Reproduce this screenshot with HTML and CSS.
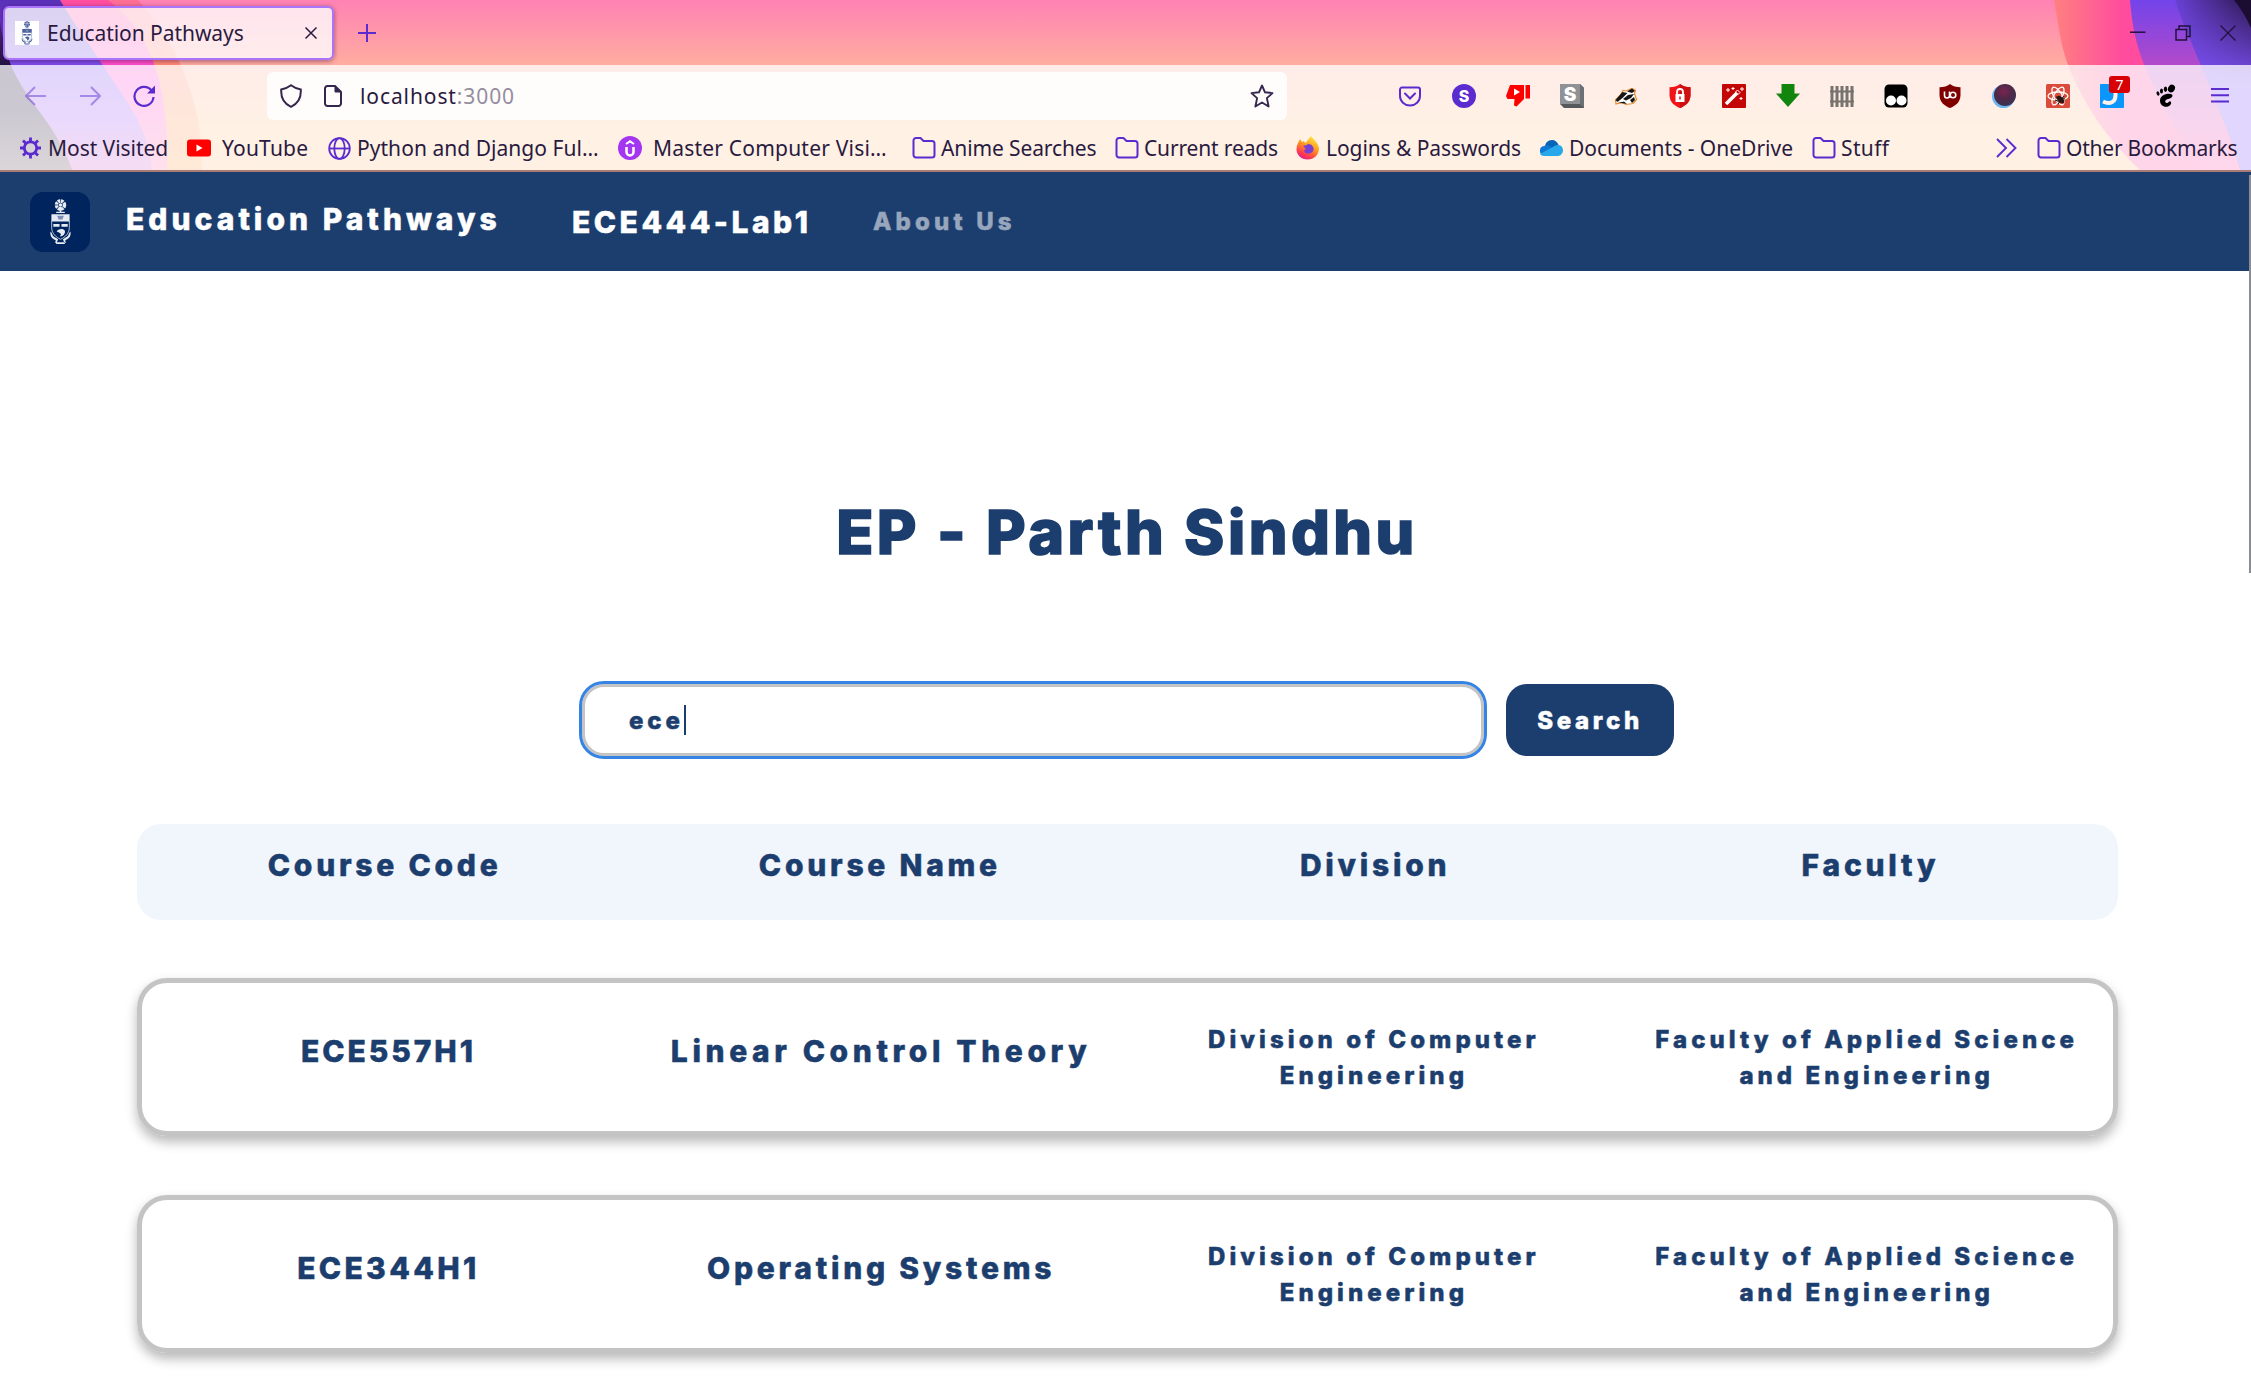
FILE: index.html
```html
<!DOCTYPE html>
<html lang="en">
<head>
<meta charset="utf-8">
<title>Education Pathways</title>
<link rel="stylesheet" href="styles.css">
</head>
<body>
<svg class="defs" width="0" height="0" aria-hidden="true">
  <symbol id="folder" viewBox="0 0 24 24"><path d="M1.500 4.500a2.500 2.500 0 0 1 2.500-2.500h4.500l3 3h8.500a2.500 2.500 0 0 1 2.500 2.500v11.500a2.500 2.500 0 0 1-2.500 2.500h-16a2.500 2.500 0 0 1-2.500-2.500z" fill="none" stroke="#5b2bcf" stroke-width="2"/></symbol>
  <symbol id="crest" viewBox="0 0 24 48">
    <circle cx="12" cy="6.300" r="4.200" fill="none" stroke="currentColor" stroke-width="3.600" stroke-dasharray="2.600 .7"/>
    <circle cx="12" cy="6.300" r="1.800" fill="currentColor"/>
    <g fill="currentColor">
      <path d="M11.200 8h1.600v6h-1.600zM7.500 13.300h9v1.200h-9zM2.500 16h19v7.500h-19z"/>
      <path d="M4.500 26h6.500v3H4.500zM13 26h6.500v3H13z"/>
      <path d="M8 34c1-3 7-4 8.500-1 1 3-2 6-5 6l1-2.500-2-1.500z"/>
      <path d="M1.500 34c2.500 2 1 4.500 5.500 6.500l2.500 1.500-1.500 4h-1.500l.5-3c-3-1-5-3-5.500-6zM22.500 34c-2.500 2-1 4.500-5.500 6.500l-2.500 1.500 1.500 4h1.500l-.5-3c3-1 5-3 5.500-6zM7.500 45h9v2h-9z"/>
    </g>
    <path d="M2.800 23v7c0 6 4.700 10 9.200 12 4.500-2 9.200-6 9.200-12v-7" fill="none" stroke="currentColor" stroke-width=".8"/>
    <path d="M8.500 17.500h7l-1.500 4h-4z" class="crest-crown"/>
  </symbol>
</svg>

<header class="browser">
  <svg class="theme" viewBox="0 0 2251 172" preserveAspectRatio="none" aria-hidden="true">
    <defs>
      <linearGradient id="sky" x1="0" y1="0" x2="0" y2="1"><stop offset="0" stop-color="#ff82b4"/><stop offset=".38" stop-color="#ffada0"/><stop offset=".75" stop-color="#ffc18a"/><stop offset="1" stop-color="#ffbe88"/></linearGradient>
      <linearGradient id="violet" x1="0" y1="0" x2="0" y2="1"><stop offset="0" stop-color="#5a30b8"/><stop offset=".4" stop-color="#8050f0"/><stop offset=".7" stop-color="#a45df0"/><stop offset="1" stop-color="#d56ac8"/></linearGradient>
      <linearGradient id="dark" x1="0" y1="0" x2="0" y2="1"><stop offset="0" stop-color="#4b2b86"/><stop offset=".35" stop-color="#1c0f38"/><stop offset=".6" stop-color="#20153a"/><stop offset="1" stop-color="#6a5060"/></linearGradient>
      <linearGradient id="magenta" x1="0" y1="0" x2="0" y2="1"><stop offset="0" stop-color="#ff4fa0"/><stop offset=".5" stop-color="#ff50d8"/><stop offset="1" stop-color="#ff7aa8"/></linearGradient>
      <linearGradient id="orange" x1="0" y1="0" x2="0" y2="1"><stop offset="0" stop-color="#ff6f98"/><stop offset=".4" stop-color="#ff8d72"/><stop offset="1" stop-color="#ffa050"/></linearGradient>
      <linearGradient id="rightPink" x1="0" y1="0" x2="1" y2="0"><stop offset="0" stop-color="#ff8080"/><stop offset=".35" stop-color="#ff4c9e"/><stop offset="1" stop-color="#ff4ca0"/></linearGradient>
      <linearGradient id="rightViolet" x1="0" y1="0" x2="0" y2="1"><stop offset="0" stop-color="#7244ea"/><stop offset=".4" stop-color="#b64ac8"/><stop offset="1" stop-color="#ff4fa8"/></linearGradient>
      <linearGradient id="rightNight" x1="0" y1="0" x2="1" y2="0"><stop offset="0" stop-color="#6940d4"/><stop offset="1" stop-color="#2c184f"/></linearGradient>
      <linearGradient id="rightNightLow" x1="0" y1="0" x2="0" y2="1"><stop offset="0" stop-color="#7e52f8" stop-opacity="0"/><stop offset=".5" stop-color="#7e52f8"/></linearGradient>
    </defs>
    <path d="M0 0h2251v172H0z" fill="url(#sky)"/>
    <path d="M60 0h78c35 38 66 98 64 172H100z" fill="url(#orange)"/>
    <path d="M40 0h68c40 30 62 80 59 172H60z" fill="url(#magenta)"/>
    <path d="M0 0h60c15 25 28 42 42 64 25 38 48 65 50 108H0z" fill="url(#violet)"/>
    <path d="M0 20c6 45 18 60 32 82 20 25 32 45 41 70H0z" fill="url(#dark)"/>
    <path d="M2054 0c6 35 8 55 22 83 18 38 38 62 66 89h109V0z" fill="url(#rightPink)"/>
    <path d="M2130 0c2 25 6 45 15 67 12 30 36 75 62 105h44V0z" fill="url(#rightViolet)"/>
    <path d="M2175 0c8 25 18 45 26 65 14 34 30 70 40 107h10V0z" fill="url(#rightNight)"/>
    <path d="M2175 0c8 25 18 45 26 65 14 34 30 70 40 107h10V0z" fill="url(#rightNightLow)"/>
    <path d="M2234 0q10 12 17 28V0z" fill="#1b0c31"/>
  </svg>

  <div class="tab-strip">
    <div class="tab">
      <span class="favicon"><svg width="12" height="24"><use href="#crest"/></svg></span>
      <span class="tab-title">Education Pathways</span>
      <svg class="tab-close" width="14" height="14" viewBox="0 0 14 14"><path d="M1.500 1.500l11 11m0-11l-11 11" stroke="#2a1a40" stroke-width="1.500"/></svg>
    </div>
    <svg class="new-tab" width="18" height="18" viewBox="0 0 18 18"><path d="M9 0v18M0 9h18" stroke="#5b2bcf" stroke-width="2"/></svg>
    <div class="window-buttons">
      <svg width="16" height="16" viewBox="0 0 16 16"><path d="M0 7.200h15.500" stroke="#20123a" stroke-width="1.500"/></svg>
      <svg width="16" height="16" viewBox="0 0 16 16" fill="none" stroke="#20123a" stroke-width="1.500"><path d="M1 4.500h10.500V15H1zM4 4.500V1h11v10.500h-3.500"/></svg>
      <svg width="16" height="16" viewBox="0 0 16 16"><path d="M.5.5l15 15m0-15l-15 15" stroke="#20123a" stroke-width="1.300"/></svg>
    </div>
  </div>

  <div class="toolbar">
    <svg class="nav-icon faded" width="22" height="22" viewBox="0 0 22 22"><path d="M21 11H1.500M10 2l-9 9 9 9" fill="none" stroke="#5b2bcf" stroke-width="2"/></svg>
    <svg class="nav-icon faded" width="22" height="22" viewBox="0 0 22 22"><path d="M1 11h19.500M12 2l9 9-9 9" fill="none" stroke="#5b2bcf" stroke-width="2"/></svg>
    <svg class="nav-icon" width="22" height="22" viewBox="0 0 22 22"><path d="M18.500 5.500A9.500 9.500 0 1 0 20.500 12" fill="none" stroke="#5b2bcf" stroke-width="2.200"/><path d="M22 .5v8h-8z" fill="#5b2bcf"/></svg>
    <div class="url-bar">
      <svg width="22" height="24" viewBox="0 0 22 24"><path d="M11 1.200c3 2.300 6 3.500 9.800 4.300.4 7.500-2.800 14.200-9.800 17.300C4 19.700.8 13 1.200 5.500 5 4.700 8 3.500 11 1.200z" fill="none" stroke="#35264d" stroke-width="2"/></svg>
      <svg class="page-icon" width="18" height="22" viewBox="0 0 18 22"><path d="M1 3.500A2.500 2.500 0 0 1 3.500 1H11l6 6v11.500a2.500 2.500 0 0 1-2.500 2.500h-11A2.500 2.500 0 0 1 1 18.500z" fill="none" stroke="#35264d" stroke-width="2"/><path d="M11 1v6h6z" fill="#35264d" stroke="#35264d"/></svg>
      <span class="url">localhost<span class="port">:3000</span></span>
      <svg class="star" width="24" height="24" viewBox="0 0 24 24"><path d="M12 1.500l3 6.800 7.500.8-5.600 5 1.700 8.400-6.600-4-6.600 4 1.700-8.400-5.600-5 7.500-.8z" fill="none" stroke="#35264d" stroke-width="1.900" stroke-linejoin="round"/></svg>
    </div>
    <div class="extensions">
      <svg viewBox="0 0 24 24"><path d="M4 3.500h16a2 2 0 0 1 2 2v6.500a10 9.500 0 0 1-20 0V5.500a2 2 0 0 1 2-2z" fill="none" stroke="#5b2bcf" stroke-width="2"/><path d="M7 9.500l5 5 5-5" fill="none" stroke="#5b2bcf" stroke-width="2" stroke-linecap="round"/></svg>
      <svg viewBox="0 0 24 24"><circle cx="12" cy="12" r="12" fill="#5b2bcf"/><text x="12" y="17.500" text-anchor="middle" class="glyph-s">S</text></svg>
      <svg viewBox="0 0 24 24"><path d="M4 1H18v14l-7.500 7.500-2.500-1 .5-6.500H1.500L0 12z" fill="#f00"/><path d="M19.500 1H24v13.500h-4.500z" fill="#f00"/><path d="M8 4.500v7l6-3.500z" fill="#fff"/></svg>
      <svg viewBox="0 0 24 24"><path d="M0 0h20l4 4v20H4l-4-4z" fill="#56595c"/><path d="M0 0h20v20H0z" fill="#8f9295"/><path d="M20 0l4 4v20l-4-4z" fill="#6c6f73"/><text x="10" y="17" text-anchor="middle" class="glyph-s wide">S</text></svg>
      <svg viewBox="0 0 24 24"><path d="M1.500 16l5-5 2.500-4.500 3 .5 6-2.500 3.500 2-1 3 2 6-3.500 4-7 1-4.500-2-5.500 1.500z" fill="#fff" stroke="#e88a2e" stroke-width="1.200"/><path d="M1.500 16l7-8 5 1-5 5-5 4zM13 7.500l5-3 3 2.500-3 2zM9 15l5-4 6-1-3 4-5 2.500zM16 16l4-3 1 3-3 3zM4 19l6-1.500 3 2.500-4-.8z" fill="#151515"/></svg>
      <svg viewBox="0 0 24 24"><path d="M12 0c3 2.500 6 3 10.500 3.200V11c0 7-5 11-10.500 13C6.500 22 1.500 18 1.500 11V3.200C6 3 9 2.500 12 0z" fill="#f01416"/><path d="M12 0c3 2.500 6 3 10.500 3.200V11c0 7-5 11-10.500 13z" fill="#cf0e10"/><path d="M7.500 10h9v8h-9z" fill="#fff"/><path d="M9 10V8a3 3 0 0 1 6 0v2" fill="none" stroke="#fff" stroke-width="1.800"/><path d="M11.300 12.500h1.400v3h-1.400z" fill="#d00"/></svg>
      <svg viewBox="0 0 24 24"><rect width="24" height="24" rx="1" fill="#c40505"/><path d="M4 20L15 9" stroke="#fff" stroke-width="3.500"/><path d="M13.500 8l2-2 2.500 2.500-2 2z" fill="none" stroke="#fff"/><path d="M6 4v4M4 6h4M11 3v3M9.500 4.500h3M20 3v4M18 5h4M19 13v3M17.500 14.500h3" stroke="#fff"/></svg>
      <svg viewBox="0 0 24 24"><path d="M5.500 0h13v9.500H24L12 23 0 9.500h5.500z" fill="#12850f"/></svg>
      <svg viewBox="0 0 24 24"><path d="M2 2v21M7 2v21M12 2v21M17 2v21M22 2v21" stroke="#77736f" stroke-width="3"/><path d="M0 7.500h24M0 17.500h24" stroke="#77736f" stroke-width="2.200"/></svg>
      <svg viewBox="0 0 24 24"><rect x=".5" y=".5" width="23" height="23" rx="4.500" fill="#000"/><circle cx="7" cy="16.500" r="5" fill="#fff"/><circle cx="17.500" cy="16.500" r="5" fill="#fff"/></svg>
      <svg viewBox="0 0 24 24"><path d="M12 0c3 2.500 6 3 10.500 3.200V11c0 7-5 11-10.500 13C6.500 22 1.500 18 1.500 11V3.200C6 3 9 2.500 12 0z" fill="#800000"/><path d="M6.500 7.500v4a2.500 2.500 0 0 0 5 0v-4M11.500 14V7.500" fill="none" stroke="#fff" stroke-width="1.600"/><circle cx="15" cy="11" r="2.800" fill="none" stroke="#fff" stroke-width="1.600"/></svg>
      <svg viewBox="0 0 24 24"><defs><radialGradient id="globeGrad" cx=".45" cy=".35" r=".65"><stop offset="0" stop-color="#7c2350"/><stop offset=".55" stop-color="#4d2848"/><stop offset="1" stop-color="#3a3450"/></radialGradient></defs><circle cx="11.500" cy="12.500" r="11.500" fill="#6db7f2"/><circle cx="13" cy="11" r="11" fill="url(#globeGrad)"/></svg>
      <svg viewBox="0 0 24 24"><rect width="24" height="24" rx="1.500" fill="#d94b3a"/><g fill="none" stroke="#fff" stroke-width="1.300"><ellipse cx="12" cy="12" rx="10" ry="4"/><ellipse cx="12" cy="12" rx="10" ry="4" transform="rotate(60 12 12)"/><ellipse cx="12" cy="12" rx="10" ry="4" transform="rotate(120 12 12)"/></g><ellipse cx="14.500" cy="15.500" rx="2.600" ry="4.500" transform="rotate(-45 14.500 15.500)" fill="#2b1515"/><path d="M10 13l9 2M12 20l6-8M9 16l9 3" stroke="#2b1515" stroke-width="1.200"/></svg>
      <span class="badged"><svg viewBox="0 0 24 24"><rect width="24" height="24" rx="1" fill="#0a96fb"/><path d="M15.500 9v2.500c0 6.500-5.500 9.500-12.500 6" fill="none" stroke="#fff0ea" stroke-width="4"/></svg><span class="badge">7</span></span>
      <svg viewBox="0 0 24 24"><ellipse cx="17.500" cy="4.500" rx="3.300" ry="4" transform="rotate(30 17.500 4.500)"/><ellipse cx="11.500" cy="5.200" rx="1.700" ry="2.700"/><ellipse cx="7.500" cy="7" rx="1.500" ry="2.500"/><ellipse cx="4" cy="9.500" rx="1.400" ry="2.200" transform="rotate(-20 4 9.500)"/><path d="M18 10.500c-4-2-12 .5-12 6 0 5 4 7 8 6 3-1 4-4 2.500-5-1.500-.8-2 2-4 1.500-2.500-1-1-3.500 1.500-4 3-.5 5.500-2.500 4-4.500z"/></svg>
      <svg viewBox="0 0 24 24"><path d="M3 5h18M3 11.300h18M3 17.600h18" stroke="#5b2bcf" stroke-width="2"/></svg>
    </div>
  </div>

  <nav class="bookmarks">
    <a class="bm most"><svg viewBox="0 0 24 24"><circle cx="10.500" cy="12" r="6.200" fill="none" stroke="#5b2bcf" stroke-width="2.800"/><path d="M10.500 1.500v4M10.500 18.500v4M0 12h4M17 12h4M3 4.500l3 3M15 16.500l3 3M18 4.500l-3 3M6 16.500l-3 3" stroke="#5b2bcf" stroke-width="2.800"/></svg><span>Most Visited</span></a>
    <a class="bm youtube wide-gap"><svg viewBox="0 0 24 24"><rect y="3.500" width="24" height="17" rx="3" fill="#f00"/><path d="M9.500 8.500v7l6-3.500z" fill="#fff"/></svg><span>YouTube</span></a>
    <a class="bm python"><svg viewBox="0 0 24 24"><g fill="none" stroke="#5b2bcf" stroke-width="1.800"><circle cx="11.500" cy="12.500" r="10.300"/><ellipse cx="11.500" cy="12.500" rx="5.200" ry="10.300"/><path d="M1.200 12.500h20.600"/></g></svg><span>Python and Django Ful…</span></a>
    <a class="bm master wide-gap"><svg viewBox="0 0 24 24"><circle cx="12" cy="12" r="12" fill="#a435f0"/><path d="M8.500 11v5a3.500 3.500 0 0 0 7 0v-5" fill="none" stroke="#fff" stroke-width="2.500"/><path d="M8 8l4-2.700L16 8" fill="none" stroke="#fff" stroke-width="2"/></svg><span>Master Computer Visi…</span></a>
    <a class="bm anime"><svg><use href="#folder"/></svg><span>Anime Searches</span></a>
    <a class="bm reads"><svg><use href="#folder"/></svg><span>Current reads</span></a>
    <a class="bm logins"><svg viewBox="0 0 24 24"><defs><linearGradient id="flame" x1=".8" y1="0" x2=".3" y2="1"><stop offset="0" stop-color="#fff04a"/><stop offset=".45" stop-color="#ff9a1f"/><stop offset=".8" stop-color="#ff3a4e"/><stop offset="1" stop-color="#e41f90"/></linearGradient></defs><path d="M2 7l2-4 2 3 2-1 1 2c2-1 3-4 6-7 2 3 7 6 8 12 0 7-5 11.500-11.500 11.500S.5 19 .5 13c0-2 .500-4 1.500-6z" fill="url(#flame)"/><path d="M7 10c2-1 3 0 5-2 4 0 6 3 5.500 6-1 3-4 4-6 3.500C8 17 7 14 10 13z" fill="#7a3fd0"/></svg><span>Logins &amp; Passwords</span></a>
    <a class="bm docs"><svg viewBox="0 0 24 24"><path d="M6 11c0-4 3-7 7-7 3 0 5.500 2 6.500 5l-7 6z" fill="#0364b8"/><path d="M5 19.500a4.800 4.800 0 0 1 0-9.500c3-1.500 5-1 7 1l8 6-3 2.500z" fill="#0f78d4"/><path d="M19.500 9c6 .5 6 10 0 11H5c-1.500 0-3-.8-4-2l13-7c2-1.500 3-2 5.500-2z" fill="#28a8ea"/></svg><span>Documents - OneDrive</span></a>
    <a class="bm stuff"><svg><use href="#folder"/></svg><span>Stuff</span></a>
    <a class="bm more"><svg viewBox="0 0 24 24"><path d="M1 3l9 9-9 9M10.500 3l9 9-9 9" fill="none" stroke="#5b2bcf" stroke-width="1.900"/></svg></a>
    <a class="bm other"><svg><use href="#folder"/></svg><span>Other Bookmarks</span></a>
  </nav>
</header>

<main class="page">
  <nav class="site-nav">
    <span class="logo"><svg width="23" height="46"><use href="#crest"/></svg></span>
    <a class="brand">Education Pathways</a>
    <a class="lab">ECE444-Lab1</a>
    <a class="about">About Us</a>
  </nav>

  <h1>EP - Parth Sindhu</h1>

  <form class="search">
    <div class="field"><span>ece</span><i class="caret"></i></div>
    <button type="button">Search</button>
  </form>

  <section class="results">
    <div class="row head">
      <span>Course Code</span><span>Course Name</span><span>Division</span><span>Faculty</span>
    </div>
    <article class="row card">
      <b class="code557">ECE557H1</b><b class="linear">Linear Control Theory</b><p>Division of Computer<br>Engineering</p><p>Faculty of Applied Science<br>and Engineering</p>
    </article>
    <article class="row card">
      <b class="code344">ECE344H1</b><b>Operating Systems</b><p>Division of Computer<br>Engineering</p><p>Faculty of Applied Science<br>and Engineering</p>
    </article>
  </section>
  <i class="scrollbar"></i>
</main>
</body>
</html>
```
FILE: styles.css
```css
* { box-sizing: border-box; }

body {
  margin: 0;
  width: 2251px;
  height: 1398px;
  overflow: hidden;
  background: #fff;
  font-family: "Noto Sans", sans-serif;
}

.defs { position: absolute; }
svg { display: block; flex: none; }

/* Browser chrome */
.browser {
  position: relative;
  height: 172px;
  color: #2a1a40;
  font-size: 21px;
  line-height: 30px;
  white-space: nowrap;
  border-bottom: 2px solid #a87c74;
}
.theme { position: absolute; inset: 0; width: 2251px; height: 172px; z-index: -1; }

.tab-strip { display: flex; align-items: center; height: 65px; padding: 0 15px 0 3px; }
.tab {
  display: flex;
  align-items: center;
  width: 331px;
  height: 54px;
  padding: 0 14px 0 10px;
  border: 2px solid #aa75fa;
  border-radius: 6px;
  background: rgba(255, 255, 255, .78);
  box-shadow: 0 1px 5px rgba(60, 0, 60, .5);
}
.favicon { display: flex; justify-content: center; width: 24px; height: 24px; margin-right: 8px; background: #fff; color: #4b609d; }
.crest-crown { fill: #7d8db4; }
.tab-title { letter-spacing: -.05px; }
.tab-close { margin-left: auto; }
.new-tab { margin-left: 24px; }
.window-buttons { display: flex; gap: 29px; margin-left: auto; }

.toolbar { display: flex; align-items: center; height: 60px; padding: 1px 19px 0 25px; background: rgba(255, 255, 255, .77); }
.nav-icon { margin-right: 32px; }
.faded { opacity: .45; }
.url-bar {
  display: flex;
  align-items: center;
  width: 1020px;
  height: 48px;
  margin-left: 80px;
  padding: 0 13px 0 13px;
  border-radius: 6px;
  background: rgba(255, 255, 255, .86);
}
.page-icon { margin-left: 22px; }
.url { margin-left: 18px; letter-spacing: .9px; }
.port { color: #948da0; }
.star { margin-left: auto; }
.extensions { display: flex; gap: 30px; margin-left: auto; }
.extensions svg { width: 24px; height: 24px; }
.glyph-s { font: 800 16px Inter, sans-serif; fill: #fff; }
.glyph-s.wide { font-size: 19px; font-weight: 900; }
.badged { position: relative; }
.badge {
  position: absolute;
  left: 9px;
  top: -8px;
  width: 21px;
  height: 17px;
  border-radius: 3px;
  background: #d70005;
  color: #fff;
  font-size: 14px;
  line-height: 17px;
  text-align: center;
}

.bookmarks {
  display: grid;
  grid-template-columns: 167px 141px 290px 294px 203px 181px 243px 273px 184px 41px 1fr;
  align-items: center;
  height: 45px;
  padding-left: 20px;
  background: rgba(255, 255, 255, .77);
}
.bm { display: flex; align-items: center; gap: 5px; }
.bm svg { width: 24px; height: 24px; }
.wide-gap { gap: 11px; }
.most { gap: 4px; letter-spacing: -.05px; }
.youtube { letter-spacing: .2px; }
.python { letter-spacing: .04px; }
.master { letter-spacing: .2px; }
.anime { letter-spacing: -.12px; }
.reads { letter-spacing: -.15px; }
.logins { gap: 6px; letter-spacing: -.08px; }
.docs { gap: 6px; }
.stuff { letter-spacing: .37px; }
.other { letter-spacing: -.22px; }

/* Page */
.page {
  position: relative;
  height: 1226px;
  font-family: Inter, sans-serif;
  font-weight: 800;
  color: #1c3e6e;
  -webkit-text-stroke: .5px currentColor;
}
.site-nav {
  display: flex;
  align-items: center;
  height: 99px;
  padding-left: 30px;
  background: #1c3e6e;
  color: #fff;
  font-size: 30px;
  white-space: nowrap;
}
.logo { display: flex; align-items: center; justify-content: center; width: 60px; height: 60px; border-radius: 13px; background: #00245d; color: #e6ebf3; }
.brand { width: 446px; margin-left: 36px; padding-bottom: 6px; letter-spacing: 4.02px; }
.lab { width: 301px; letter-spacing: 3.5px; }
.about { color: #98a6bd; font-size: 24px; letter-spacing: 4.15px; }

h1 { margin: 221px 0 0; padding-left: 3px; font-size: 61px; line-height: 80px; font-weight: 800; letter-spacing: 3.5px; text-align: center; -webkit-text-stroke: 1.5px currentColor; }

.search { display: flex; gap: 22px; margin: 112px 0 0 582px; font-size: 24px; }
.field {
  display: flex;
  align-items: center;
  width: 902px;
  height: 72px;
  padding-left: 44px;
  border: 3px solid #c4c4c4;
  border-radius: 22px;
  outline: 3px solid #3584e4;
  letter-spacing: 3.9px;
}
.caret { width: 2px; height: 30px; background: #1c3e6e; }
.search button {
  width: 168px;
  height: 72px;
  padding: 0;
  border: 0;
  border-radius: 21px;
  background: #1c3e6e;
  color: #fff;
  font: inherit;
  letter-spacing: 3.69px;
  -webkit-text-stroke: .5px #fff;
}

.results { display: flex; flex-direction: column; width: 1981px; margin: 68px 0 0 137px; }
.row { display: grid; grid-template-columns: repeat(4, 1fr); align-items: center; text-align: center; border-radius: 24px; font-size: 30px; line-height: 36px; letter-spacing: 3.75px; }
.head { height: 96px; padding-bottom: 14px; background: #f1f6fd; }
.card { height: 158px; margin-top: 58px; border: 5px solid #c4c4c4; border-radius: 30px; box-shadow: 0 6px 12px rgba(0, 0, 0, .28); }
.card b { font-weight: 800; padding-bottom: 13px; }
.card p { margin: 0; padding-top: 2px; font-size: 24px; letter-spacing: 4.06px; white-space: nowrap; }
.card .code557 { letter-spacing: 2.95px; }
.card .code344 { letter-spacing: 3.34px; }
.card .linear { letter-spacing: 4.6px; }
.card + .card { margin-top: 59px; }

.scrollbar { position: absolute; right: 0; top: 3px; width: 2px; height: 398px; background: #8a8d91; }
```
